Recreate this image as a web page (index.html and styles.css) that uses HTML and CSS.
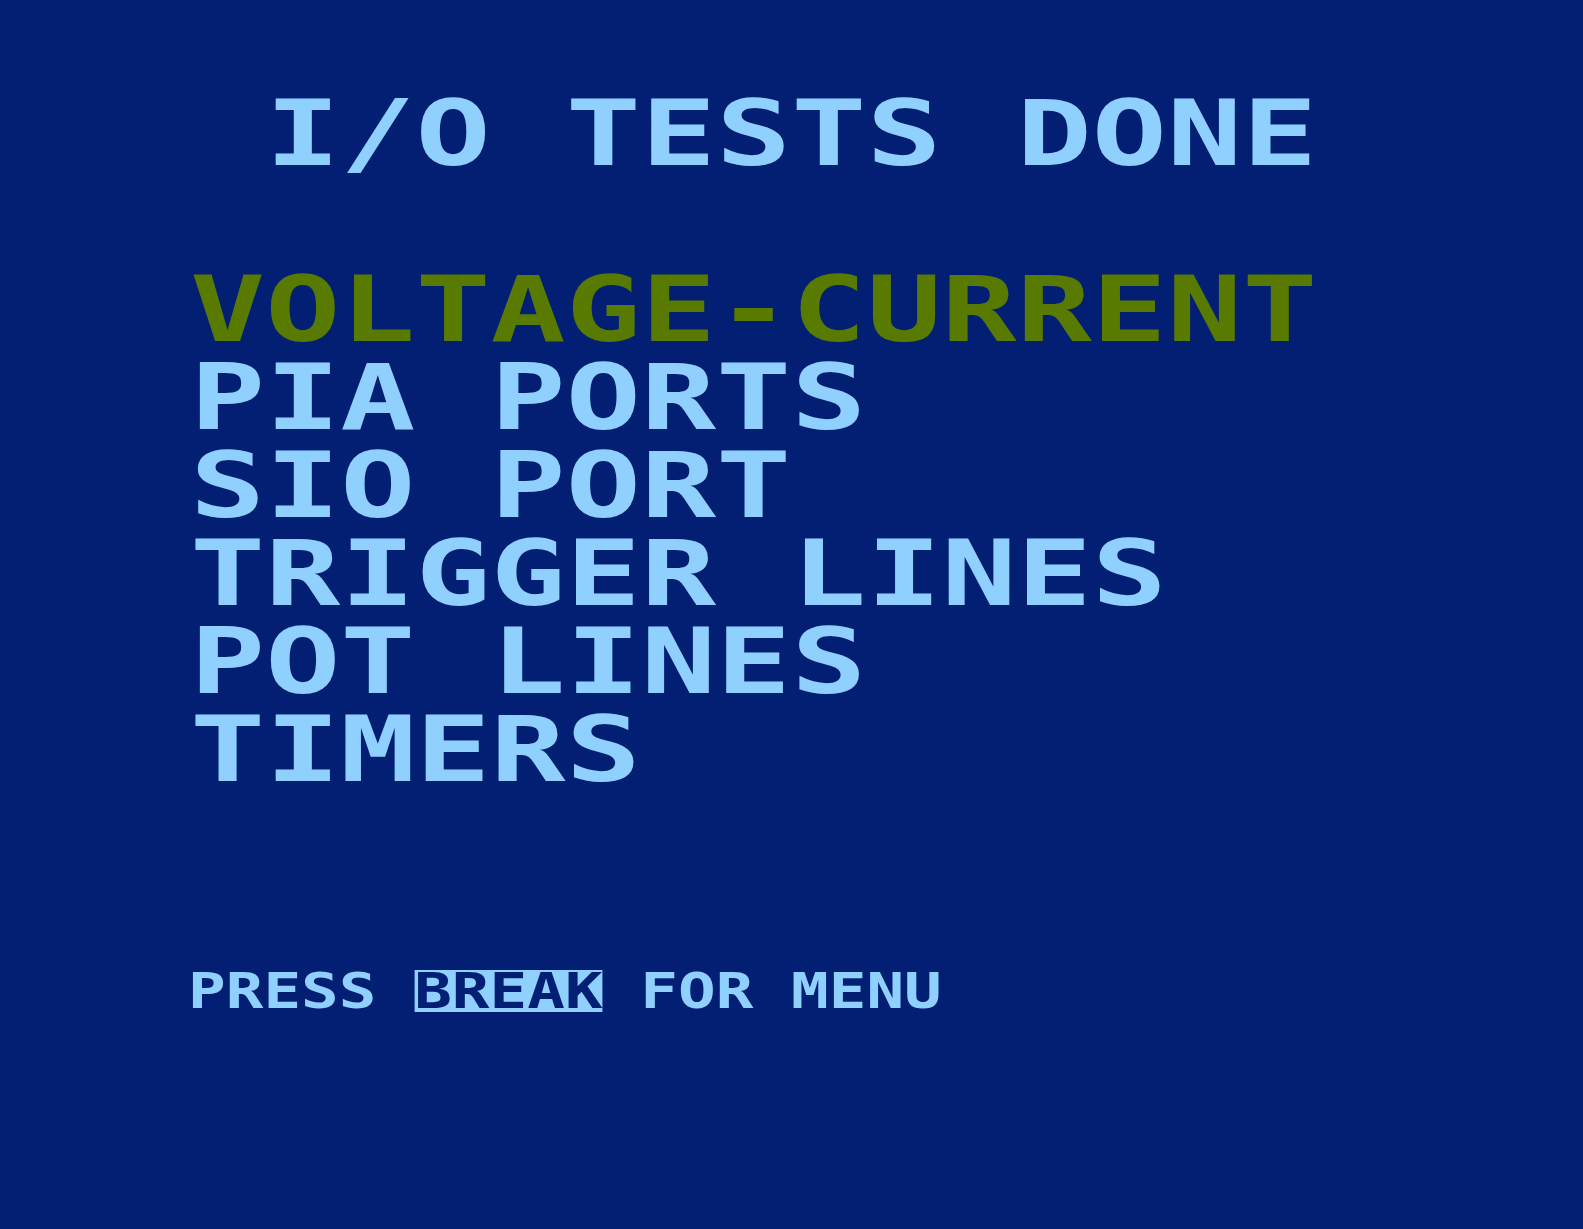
FILE: index.html
```
<!DOCTYPE html>
<html lang="en">
<head>
    <meta charset="UTF-8">
    <meta name="viewport" content="width=device-width, initial-scale=1.0">
    <title>I/O Tests</title>
    <link rel="stylesheet" href="styles.css">
</head>
<body>
    <main class="screen">
        <h1 class="title"> I/O TESTS DONE</h1>

        <!-- Test list, the active one is highlighted -->
        <ul class="tests">
            <li class="active">VOLTAGE-CURRENT</li>
            <li>PIA PORTS</li>
            <li>SIO PORT</li>
            <li>TRIGGER LINES</li>
            <li>POT LINES</li>
            <li>TIMERS</li>
        </ul>

        <p class="prompt">PRESS <span class="key">BREAK</span> FOR MENU</p>
    </main>
</body>
</html>
```

FILE: styles.css
```
html, body {
    margin: 0;
    padding: 0;
    background-color: #021f74;
    overflow: hidden;
}
body {
    min-height: 1229px;
}
.screen {
    padding: 90px 0 0 190px;
    font-family: "DejaVu Sans Mono", "Liberation Mono", monospace;
    font-weight: bold;
    color: #8fd0ff;
}
.title,
.tests li {
    width: max-content;
    margin: 0;
    font-size: 90px;
    line-height: 88px;
    font-weight: bold;
    white-space: pre;
    transform: scaleX(1.387);
    transform-origin: left top;
}
.title {
    margin-bottom: 88px;
}
.tests {
    list-style: none;
    margin: 0;
    padding: 0;
}
.tests li.active {
    color: #587a00;
}
.prompt {
    width: max-content;
    margin: 175px 0 0 -2px;
    font-size: 50px;
    line-height: 44px;
    white-space: pre;
    transform: scaleX(1.252);
    transform-origin: left top;
}
.key {
    display: inline-block;
    line-height: 42px;
    background-color: #8fd0ff;
    color: #021f74;
}
```
